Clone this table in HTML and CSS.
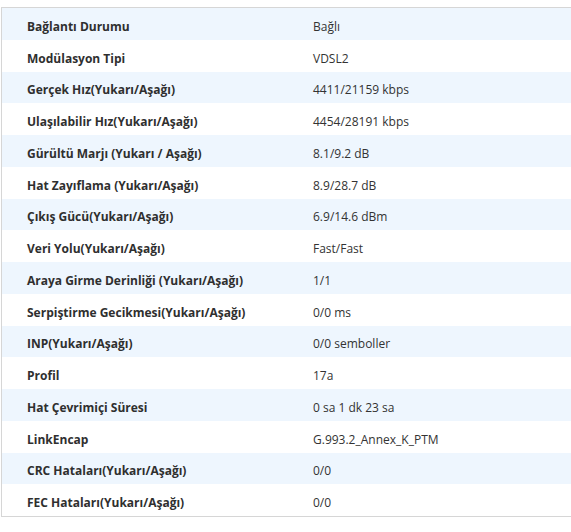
FILE: index.html
```html
<!DOCTYPE html>
<html>
<head>
<meta charset="utf-8">
<link rel="stylesheet" href="styles.css">
</head>
<body>
<div class="panel">
  <div class="row"><div class="label">Bağlantı Durumu</div><div class="value">Bağlı</div></div>
  <div class="row"><div class="label">Modülasyon Tipi</div><div class="value">VDSL2</div></div>
  <div class="row"><div class="label">Gerçek Hız(Yukarı/Aşağı)</div><div class="value">4411/21159 kbps</div></div>
  <div class="row"><div class="label">Ulaşılabilir Hız(Yukarı/Aşağı)</div><div class="value">4454/28191 kbps</div></div>
  <div class="row"><div class="label">Gürültü Marjı (Yukarı / Aşağı)</div><div class="value">8.1/9.2 dB</div></div>
  <div class="row"><div class="label">Hat Zayıflama (Yukarı/Aşağı)</div><div class="value">8.9/28.7 dB</div></div>
  <div class="row"><div class="label">Çıkış Gücü(Yukarı/Aşağı)</div><div class="value">6.9/14.6 dBm</div></div>
  <div class="row"><div class="label">Veri Yolu(Yukarı/Aşağı)</div><div class="value">Fast/Fast</div></div>
  <div class="row"><div class="label">Araya Girme Derinliği (Yukarı/Aşağı)</div><div class="value">1/1</div></div>
  <div class="row"><div class="label">Serpiştirme Gecikmesi(Yukarı/Aşağı)</div><div class="value">0/0 ms</div></div>
  <div class="row"><div class="label">INP(Yukarı/Aşağı)</div><div class="value">0/0 semboller</div></div>
  <div class="row"><div class="label">Profil</div><div class="value">17a</div></div>
  <div class="row"><div class="label">Hat Çevrimiçi Süresi</div><div class="value">0 sa 1 dk 23 sa</div></div>
  <div class="row"><div class="label">LinkEncap</div><div class="value">G.993.2_Annex_K_PTM</div></div>
  <div class="row"><div class="label">CRC Hataları(Yukarı/Aşağı)</div><div class="value">0/0</div></div>
  <div class="row"><div class="label">FEC Hataları(Yukarı/Aşağı)</div><div class="value">0/0</div></div>
</div>
</body>
</html>
```
FILE: styles.css
```css
html, body {
  margin: 0;
  padding: 0;
  background: #ffffff;
  overflow: hidden;
}
body {
  font-family: "Open Sans", "Noto Sans", sans-serif;
  font-size: 12px;
  color: #333333;
}
.panel {
  margin: 7px 0 0 1px;
  border: 1px solid #d6d6d6;
  border-right: none;
}
.row {
  display: grid;
  grid-template-columns: 286px 1fr;
  height: 31.75px;
  box-sizing: border-box;
  padding-top: 5px;
  align-items: center;
}
.row:nth-child(odd) {
  background: #eef6fe;
}
.label {
  padding-left: 25px;
  font-weight: 700;
  color: #2f2f2f;
}
.value {
  padding-left: 25px;
  color: #333333;
}
```
